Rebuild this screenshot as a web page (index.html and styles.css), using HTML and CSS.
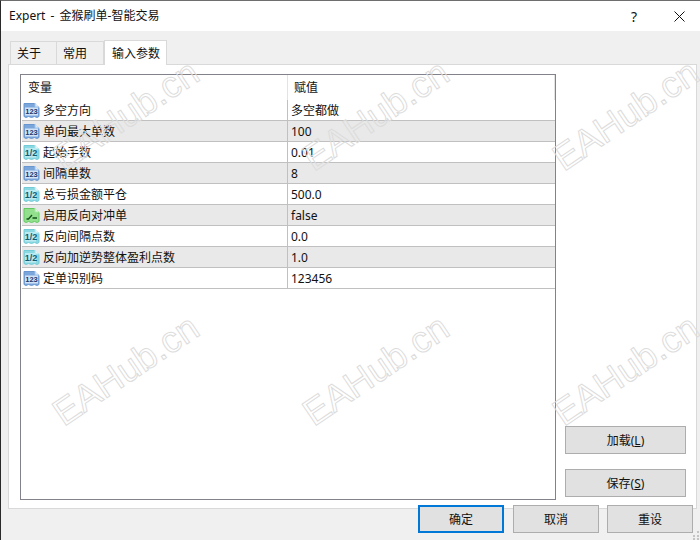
FILE: index.html
```html
<!DOCTYPE html>
<html lang="zh">
<head>
<meta charset="utf-8">
<title>Expert</title>
<link rel="stylesheet" href="styles.css">
</head>
<body>
<svg class="defs" width="0" height="0">
  <defs>
    <symbol id="doc-int" viewBox="0 0 17 16">
      <path d="M1 1.5H11.5L16 5.5V14.5L14 15.5L11.5 14.5L8.5 15.5L5.5 14.5L3 15.5L1 14.5Z" fill="#7aa6dc" stroke="#6a96d0"/>
      <path d="M12 1V5H16" fill="#dcebfa" stroke="#9cc0e8"/>
      <rect x="2" y="5.5" width="13" height="8" fill="#d2e3f6"/>
      <text x="8.5" y="12.4" class="glyph">123</text>
    </symbol>
    <symbol id="doc-dbl" viewBox="0 0 17 16">
      <path d="M1 1.5H11.5L16 5.5V14.5L14 15.5L11.5 14.5L8.5 15.5L5.5 14.5L3 15.5L1 14.5Z" fill="#8ad8e2" stroke="#74cbd8"/>
      <path d="M12 1V5H16" fill="#e0f7f9" stroke="#a8e4ec"/>
      <rect x="2" y="4" width="11" height="9.5" fill="#bdeaf0"/>
      <text x="8" y="12.4" class="glyph glyph-dbl">1/2</text>
    </symbol>
    <symbol id="doc-bool" viewBox="0 0 17 16">
      <path d="M1 1.5H11.5L16 5.5V14.5L14 15.5L11.5 14.5L8.5 15.5L5.5 14.5L3 15.5L1 14.5Z" fill="#92e08e" stroke="#62c860"/>
      <path d="M12 1V5H16" fill="#dcf7da" stroke="#a4e8a0"/>
      <path d="M3.5 12H5.5L9 8M9.5 11H14" fill="none" stroke="#14501c" stroke-width="1.3"/>
    </symbol>
  </defs>
</svg>
<div class="window">
  <header class="titlebar">
    <span class="title">Expert - 金猴刷单-智能交易</span>
    <span class="help">?</span>
    <svg class="close" width="11" height="11" viewBox="0 0 11 11"><path d="M0.5 0.5L10.5 10.5M10.5 0.5L0.5 10.5" stroke="#111" fill="none"/></svg>
  </header>
  <nav class="tabs">
    <span class="tab">关于</span>
    <span class="tab">常用</span>
    <span class="tab tab-active">输入参数</span>
  </nav>
  <main class="panel">
    <section class="list">
      <div class="row-head">
        <div class="head-name">变量</div>
        <div class="head-value">赋值</div>
      </div>
      <div class="row"><div class="name"><svg class="icon"><use href="#doc-int"/></svg>多空方向</div><div class="value">多空都做</div></div>
      <div class="row alt"><div class="name"><svg class="icon"><use href="#doc-int"/></svg>单向最大单数</div><div class="value">100</div></div>
      <div class="row"><div class="name"><svg class="icon"><use href="#doc-dbl"/></svg>起始手数</div><div class="value">0.01</div></div>
      <div class="row alt"><div class="name"><svg class="icon"><use href="#doc-int"/></svg>间隔单数</div><div class="value">8</div></div>
      <div class="row"><div class="name"><svg class="icon"><use href="#doc-dbl"/></svg>总亏损金额平仓</div><div class="value">500.0</div></div>
      <div class="row alt"><div class="name"><svg class="icon"><use href="#doc-bool"/></svg>启用反向对冲单</div><div class="value">false</div></div>
      <div class="row"><div class="name"><svg class="icon"><use href="#doc-dbl"/></svg>反向间隔点数</div><div class="value">0.0</div></div>
      <div class="row alt"><div class="name"><svg class="icon"><use href="#doc-dbl"/></svg>反向加逆势整体盈利点数</div><div class="value">1.0</div></div>
      <div class="row"><div class="name"><svg class="icon"><use href="#doc-int"/></svg>定单识别码</div><div class="value">123456</div></div>
    </section>
    <aside class="side">
      <button class="btn btn-side">加载(<u>L</u>)</button>
      <button class="btn btn-side">保存(<u>S</u>)</button>
    </aside>
  </main>
  <footer class="footer">
    <button class="btn btn-foot btn-default">确定</button>
    <button class="btn btn-foot">取消</button>
    <button class="btn btn-foot">重设</button>
  </footer>
  <svg class="grip" width="8" height="10" viewBox="0 0 8 10"><path d="M5 1h2v2H5zM1 5h2v2H1zM5 5h2v2H5zM1 8h2v2H1zM5 8h2v2H5z" fill="#c4c4c4"/></svg>
  <div class="watermarks">
    <span class="mark">EAHub.cn</span><span class="mark">EAHub.cn</span><span class="mark">EAHub.cn</span>
    <span class="mark">EAHub.cn</span><span class="mark">EAHub.cn</span><span class="mark">EAHub.cn</span>
  </div>
</div>
</body>
</html>
```
FILE: styles.css
```css
* { box-sizing: border-box; }
html, body { margin: 0; padding: 0; }
body {
  width: 700px;
  height: 540px;
  overflow: hidden;
  font-family: "Noto Sans", "Noto Sans CJK SC", sans-serif;
  font-size: 12px;
  color: #111;
}
.defs { position: absolute; }
.glyph {
  font-family: "Liberation Sans", sans-serif;
  font-size: 7.5px;
  font-weight: 700;
  fill: #17386e;
  text-anchor: middle;
}
.glyph-dbl { fill: #125a70; font-size: 9px; }
.window {
  position: relative;
  width: 700px;
  height: 540px;
  background: #f0f0f0;
  border-top: 1px solid #6e6e6e;
  border-left: 1px solid #2a2a2a;
  display: flex;
  flex-direction: column;
  overflow: hidden;
}
.titlebar {
  height: 30px;
  flex: none;
  background: #fff;
  display: flex;
  align-items: center;
  padding: 0 15px 0 8px;
}
.title { flex: 1; font-size: 12px; line-height: 30px; word-spacing: 2px; }
.help { font-size: 14px; margin-right: 37px; }
.tabs {
  flex: none;
  height: 34px;
  display: flex;
  align-items: flex-end;
  padding-left: 9px;
  position: relative;
  z-index: 1;
  margin-bottom: -1px;
}
.tab {
  height: 23px;
  width: 47px;
  margin-bottom: 1px;
  border: 1px solid #d9d9d9;
  border-bottom: 0;
  background: #f0f0f0;
  display: flex;
  align-items: center;
  padding-left: 6px;
}
.tab + .tab { border-left: 0; }
.tab-active {
  width: 63px;
  height: 25px;
  margin-bottom: 0;
  background: #fff;
  border-left: 1px solid #d9d9d9 !important;
  padding-left: 7px;
}
.panel {
  flex: none;
  width: 689px;
  height: 445px;
  margin-left: 7px;
  background: #fff;
  border: 1px solid #d9d9d9;
  padding: 9px 0 0 11px;
  display: flex;
}
.list {
  width: 536px;
  height: 426px;
  flex: none;
  border: 1px solid #82828a;
  padding-left: 1px;
  background: #fff;
}
.row-head {
  height: 25px;
  display: flex;
  align-items: center;
}
.head-name {
  width: 266px;
  height: 25px;
  line-height: 26px;
  padding-left: 6px;
  border-right: 1px solid #e3e3e3;
  flex: none;
}
.head-value {
  width: 267px;
  height: 25px;
  line-height: 26px;
  padding-left: 6px;
  border-right: 1px solid #e3e3e3;
  flex: none;
}
.row {
  width: 533px;
  height: 21px;
  display: flex;
  border-bottom: 1px solid #c0c0c0;
}
.row:first-of-type { height: 20px; }
.alt { background: #e9e9e9; }
.name {
  width: 266px;
  flex: none;
  display: flex;
  align-items: center;
  border-right: 1px solid #c0c0c0;
  padding-left: 1px;
}
.icon { width: 17px; height: 16px; margin-right: 3px; flex: none; }
.value {
  padding-left: 3px;
  line-height: 22px;
}
.side {
  margin-left: 9px;
  width: 121px;
  height: 423px;
  display: flex;
  flex-direction: column;
  justify-content: flex-end;
  gap: 15px;
}
.btn {
  font: inherit;
  color: #111;
  background: #e1e1e1;
  border: 1px solid #adadad;
  padding: 0;
  height: 28px;
}
.btn-side { width: 121px; }
.footer {
  flex: none;
  display: flex;
  justify-content: flex-end;
  gap: 8px;
  margin-top: -4px;
  padding-right: 7px;
  position: relative;
}
.btn-foot { width: 86px; }
.btn-default { border: 2px solid #0078d7; margin-right: 1px; }
.grip { position: absolute; right: 0; bottom: 0; }
.watermarks {
  position: absolute;
  left: 0;
  top: 0;
  width: 800px;
  display: grid;
  grid-template-columns: repeat(3, 250px);
  grid-auto-rows: 255px;
  pointer-events: none;
}
.mark {
  font-family: "Liberation Sans", sans-serif;
  font-size: 37px;
  line-height: 37px;
  color: transparent;
  -webkit-text-stroke: 1px #dcdcdc;
  width: 170px;
  height: 37px;
  margin: 139px 0 0 66px;
  white-space: nowrap;
  transform: rotate(-34deg);
  transform-origin: 0 100%;
}
```
